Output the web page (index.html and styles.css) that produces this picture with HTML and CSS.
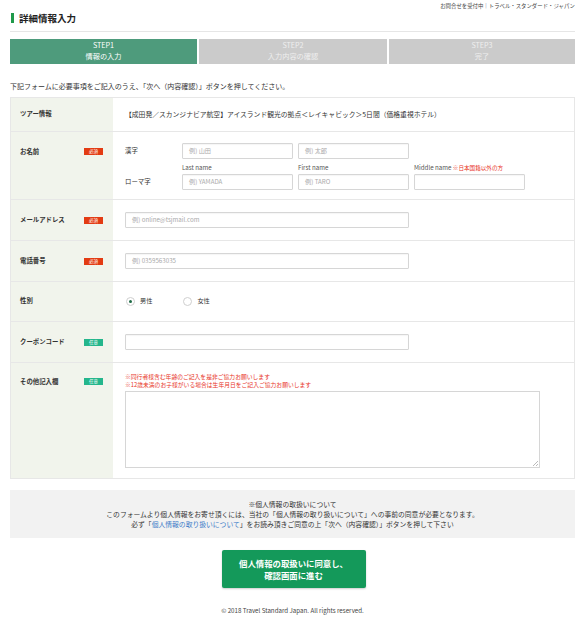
FILE: index.html
```html
<!DOCTYPE html>
<html lang="ja">
<head>
<meta charset="utf-8">
<title>詳細情報入力</title>
<link rel="stylesheet" href="styles.css">
</head>
<body>
<div class="page">
  <div class="topbar">お問合せを受付中｜トラベル・スタンダード・ジャパン</div>
  <h1 class="title">詳細情報入力</h1>
  <div class="steps">
    <div class="step active">STEP1<br>情報の入力</div>
    <div class="step">STEP2<br>入力内容の確認</div>
    <div class="step">STEP3<br>完了</div>
  </div>
  <p class="lead">下記フォームに必要事項をご記入のうえ、「次へ（内容確認）」ボタンを押してください。</p>

  <div class="form">
    <div class="row r-tour">
      <div class="label">ツアー情報</div>
      <div class="field tour">【成田発／スカンジナビア航空】アイスランド観光の拠点＜レイキャビック＞5日間（価格重視ホテル）</div>
    </div>
    <div class="row r-name">
      <div class="label top">お名前<span class="badge req">必須</span></div>
      <div class="field names">
        <span class="sub">漢字</span>
        <span class="input">例) 山田</span>
        <span class="input">例) 太郎</span>
        <span></span>
        <span></span>
        <span class="cap">Last name</span>
        <span class="cap">First name</span>
        <span class="cap">Middle name <em>※日本国籍以外の方</em></span>
        <span class="sub">ローマ字</span>
        <span class="input">例) YAMADA</span>
        <span class="input">例) TARO</span>
        <span class="input"></span>
      </div>
    </div>
    <div class="row r-std">
      <div class="label">メールアドレス<span class="badge req">必須</span></div>
      <div class="field"><span class="input wide">例) online@tsjmail.com</span></div>
    </div>
    <div class="row r-std">
      <div class="label">電話番号<span class="badge req">必須</span></div>
      <div class="field"><span class="input wide">例) 0359563035</span></div>
    </div>
    <div class="row r-gender">
      <div class="label">性別</div>
      <div class="field radios">
        <span class="radio on"></span><span class="rtext">男性</span>
        <span class="radio"></span><span class="rtext">女性</span>
      </div>
    </div>
    <div class="row r-std">
      <div class="label">クーポンコード<span class="badge opt">任意</span></div>
      <div class="field"><span class="input wide"></span></div>
    </div>
    <div class="row r-other">
      <div class="label top2">その他記入欄<span class="badge opt">任意</span></div>
      <div class="field other">
        <p class="note">※同行者様含む年齢のご記入を是非ご協力お願いします<br>※12歳未満のお子様がいる場合は生年月日をご記入ご協力お願いします</p>
        <div class="textarea"><span class="grip"></span></div>
      </div>
    </div>
  </div>

  <div class="privacy">
    ※個人情報の取扱いについて<br>
    このフォームより個人情報をお寄せ頂くには、当社の「個人情報の取り扱いについて」への事前の同意が必要となります。<br>
    必ず「<a href="#">個人情報の取り扱いについて</a>」をお読み頂きご同意の上「次へ（内容確認）」ボタンを押して下さい
  </div>

  <div class="btnwrap"><button class="submit">個人情報の取扱いに同意し、<br>確認画面に進む</button></div>

  <p class="copy">© 2018 Travel Standard Japan. All rights reserved.</p>
</div>
</body>
</html>
```
FILE: styles.css
```css
* { box-sizing: border-box; }
html, body { margin: 0; padding: 0; background: #fff; }
body {
  font-family: "Noto Sans CJK JP", "Open Sans", sans-serif;
  color: #333;
  font-size: 6.6px;
  line-height: 1.4;
}
.page { padding: 0 10px; }
.topbar {
  text-align: right;
  font-size: 5.4px;
  line-height: 8px;
  padding-top: 2px;
  height: 12px;
  color: #444;
}
.title {
  margin: 1px 0 0 1px;
  font-size: 9.5px;
  font-weight: bold;
  line-height: 10px;
  border-left: 3px solid #1f9a4b;
  padding-left: 5px;
  color: #222;
  height: 10px;
}
.steps {
  margin-top: 8px;
  border-top: 1px solid #e6e6e6;
  padding-top: 7px;
  display: grid;
  grid-template-columns: 187px 1fr 186px;
  gap: 2px;
}
.step {
  height: 25px;
  background: #cbcbcb;
  color: #efefef;
  text-align: center;
  font-size: 7.2px;
  line-height: 11px;
  padding-top: 1px;
}
.step.active { background: #4e9b7c; color: #fff; }
.lead {
  margin: 0;
  padding-top: 18px;
  height: 33px;
  line-height: 8px;
  font-size: 7px;
}
.form { border: 1px solid #e7e7e7; border-bottom: 0; }
.row {
  display: grid;
  grid-template-columns: 102px 1fr;
  border-bottom: 1px solid #e7e7e7;
}
.label {
  background: #f1f4ec;
  display: flex;
  align-items: center;
  justify-content: space-between;
  padding: 0 10px 0 9px;
  font-weight: bold;
  font-size: 6.4px;
  color: #333;
}
.label.top { align-items: flex-start; padding-top: 16px; }
.label.top2 { align-items: flex-start; padding-top: 15px; }
.badge {
  display: inline-block;
  width: 19px;
  height: 7px;
  font-size: 4.5px;
  line-height: 7px;
  text-align: center;
  color: #fff;
  font-weight: normal;
}
.badge.req { background: #e33b13; }
.badge.opt { background: #24b68c; }
.field {
  padding-left: 12px;
  display: flex;
  align-items: center;
}
.r-tour { height: 34px; }
.r-name { height: 68px; }
.r-std { height: 41px; }
.r-gender { height: 40px; }
.r-other { height: 116px; }
.tour { font-size: 6.8px; }
.input {
  display: block;
  height: 16px;
  border: 1px solid #d6d6d6;
  border-radius: 1px;
  background: #fff;
  color: #aaa;
  font-size: 6.2px;
  line-height: 14px;
  padding-left: 6px;
  box-shadow: inset 0 1px 1px rgba(0,0,0,0.04);
}
.input.wide { width: 284px; }
.names {
  display: grid;
  grid-template-columns: 52px 111px 111px 111px;
  grid-template-rows: 16px 15px 16px;
  column-gap: 5px;
  row-gap: 0;
  align-items: center;
  align-content: start;
  padding-top: 11px;
}
.names .sub { font-size: 6.4px; }
.cap { font-size: 6.2px; color: #555; line-height: 8px; align-self: end; padding-bottom: 2px; }
.cap em { font-style: normal; color: #e8341f; font-size: 5.6px; }
.radio {
  width: 9px; height: 9px;
  border: 1px solid #cfcfcf;
  border-radius: 50%;
  background: #fff;
  display: inline-flex;
  align-items: center;
  justify-content: center;
  margin-left: 1px;
}
.radio.on::after {
  content: "";
  width: 3px; height: 3px;
  border-radius: 50%;
  background: #1e6b46;
}
.rtext { margin-left: 5px; margin-right: 30px; font-size: 6.2px; }
.other { flex-direction: column; align-items: flex-start; padding-top: 10px; }
.note {
  margin: 0;
  color: #e8341f;
  font-size: 5.8px;
  line-height: 8px;
}
.textarea {
  margin-top: 2px;
  width: 415px;
  height: 77px;
  border: 1px solid #d6d6d6;
  background: #fff;
  position: relative;
}
.grip {
  position: absolute;
  right: 1px; bottom: 1px;
  width: 5px; height: 5px;
  background: linear-gradient(135deg, transparent 45%, #bbb 45%, #bbb 55%, transparent 55%, transparent 70%, #bbb 70%, #bbb 80%, transparent 80%);
}
.privacy {
  margin-top: 11px;
  background: #f2f2f2;
  text-align: center;
  font-size: 6.8px;
  line-height: 10px;
  padding: 9px 0 9px;
  height: 48px;
  color: #333;
}
.privacy a { color: #3a7bc8; text-decoration: none; }
.btnwrap { display: flex; justify-content: center; padding-top: 12px; }
.submit {
  width: 144px;
  height: 38px;
  margin-left: 2px;
  background: #14995a;
  border: 0;
  border-radius: 2px;
  color: #fff;
  font-family: "Noto Sans CJK JP", sans-serif;
  font-weight: bold;
  font-size: 8.4px;
  line-height: 12px;
  box-shadow: 0 1px 2px rgba(0,0,0,0.2);
  padding: 0;
}
.copy {
  margin: 0;
  padding-top: 19px;
  text-align: center;
  font-size: 6.2px;
  line-height: 8px;
  color: #444;
}
```
